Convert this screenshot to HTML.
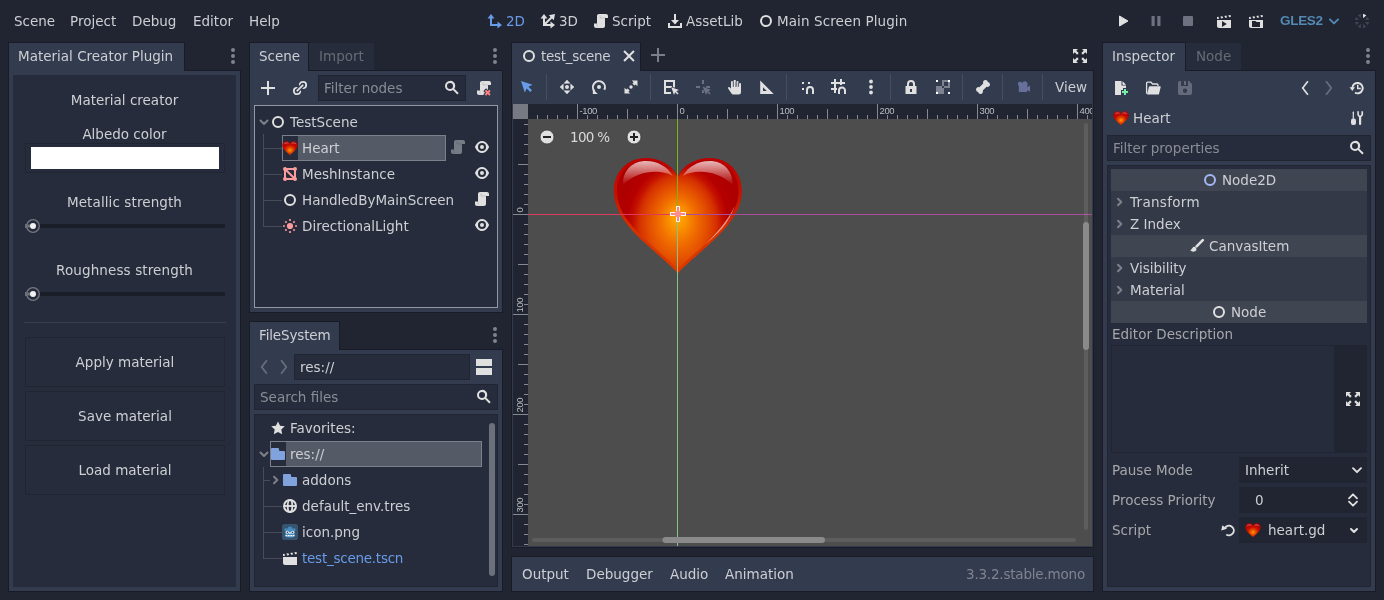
<!DOCTYPE html>
<html><head><meta charset="utf-8"><title>Godot Engine</title>
<style>
*{box-sizing:border-box;margin:0;padding:0}
html,body{width:1384px;height:600px;overflow:hidden;background:#202531}
body{position:relative;font-family:"DejaVu Sans","Liberation Sans",sans-serif;font-size:13.5px;color:#cdcfd3;line-height:16px}
.a{position:absolute}
.t{will-change:transform;position:absolute;white-space:nowrap;height:16px;line-height:16px}
.c{text-align:center}
.p{position:absolute;background:#333b4f}
.d{position:absolute;background:#262c3b}
.dim{color:#676b76}
.ph{color:#8a8d96}
.lbl{color:#a6a7aa}
svg{position:absolute;overflow:visible}
.gs{will-change:transform}
.i{position:absolute;width:16px;height:16px}
.btn{position:absolute;background:#262c3b;border:1px solid #202531;text-align:center}
.le{position:absolute;background:#262c3b;border:1px solid #202531}
.sep{position:absolute;width:1px;background:#474e60}
</style></head><body>
<svg width="0" height="0" style="left:0;top:0"><defs><radialGradient id="hgs" cx="50%" cy="64%" r="56%"><stop offset="0" stop-color="#ff9e00"/><stop offset="0.3" stop-color="#e65000"/><stop offset="0.65" stop-color="#c81000"/><stop offset="1" stop-color="#b40000"/></radialGradient></defs></svg>

<div class="t " style="left:14px;top:13px;">Scene</div>
<div class="t " style="left:70px;top:13px;">Project</div>
<div class="t " style="left:132px;top:13px;">Debug</div>
<div class="t " style="left:193px;top:13px;">Editor</div>
<div class="t " style="left:249px;top:13px;">Help</div>
<div class="t " style="left:506px;top:13px;color:#699ce8">2D</div>
<div class="t " style="left:559px;top:13px;">3D</div>
<div class="t " style="left:612px;top:13px;">Script</div>
<div class="t " style="left:686px;top:13px;">AssetLib</div>
<div class="t " style="left:777px;top:13px;letter-spacing:0.100px">Main Screen Plugin</div>
<div class="t " style="left:1280px;top:13px;color:#5489b4;font-weight:bold;font-size:13.5px;letter-spacing:-0.300px;font-family:Liberation Sans,sans-serif">GLES2</div>
<svg style="left:487px;top:13px;" width="16" height="16" viewBox="0 0 16 16"><path d="M4 1 7.500 5.500H5V11H10.500V8.500L15 12 10.500 15.500V13H3V5.500H.5Z" fill="#699ce8" /></svg>
<svg style="left:540px;top:13px;" width="16" height="16" viewBox="0 0 16 16"><path d="M4 1 7.500 5.500H5V9.600L10.600 4 8.800 2.200 15 1 13.800 7.200 12 5.400 6.400 11H10.500V8.500L15 12 10.500 15.500V13H3V5.500H.5Z" fill="#e0e0e0" /></svg>
<svg style="left:593px;top:13px;" width="16" height="16" viewBox="0 0 16 16"><path d="M6 1C4.900 1 4 1.900 4 3V13H4V10.500H1V13C1 14.100 1.900 15 3 15H10C11.100 15 12 14.100 12 13V5H15V3C15 1.900 14.100 1 13 1Z" fill="#e0e0e0" /><path d="M7 2.200V5H12" fill="none" stroke="#000" stroke-opacity=".18" stroke-width=".7"/><path d="M4 10.500V14.600" fill="none" stroke="#000" stroke-opacity=".15" stroke-width=".7"/></svg>
<svg style="left:667px;top:13px;" width="16" height="16" viewBox="0 0 16 16"><path d="M7 1h2v6h3l-4 4.500L4 7h3zM1 10h2v3h10v-3h2v5H1z" fill="#e0e0e0" /></svg>
<svg style="left:758px;top:13px;" width="16" height="16" viewBox="0 0 16 16"><circle cx="8" cy="8" r="5" fill="none" stroke="#e0e0e0" stroke-width="2"/></svg>
<svg style="left:1115px;top:13px;" width="16" height="16" viewBox="0 0 16 16"><path d="M4.500 3v10l8.500-5z" fill="#e0e0e0" stroke="#e0e0e0" stroke-width="1" stroke-linejoin="round"/></svg>
<svg style="left:1148px;top:13px;" width="16" height="16" viewBox="0 0 16 16"><path d="M3.500 3h3.200v10H3.500zM9.300 3h3.200v10H9.300z" fill="#6d7180" /></svg>
<svg style="left:1180px;top:13px;" width="16" height="16" viewBox="0 0 16 16"><rect x="3" y="3" width="10" height="10" rx="1" fill="#6d7180"/></svg>
<svg style="left:1216px;top:13px;" width="16" height="16" viewBox="0 0 16 16"><path d="m14.560 2-2.240.330.820 1.900 1.710-.250zm-4.220.620-1.980.290.820 1.900 1.980-.290zm-3.960.580-1.980.290.820 1.900 1.980-.290zm-3.960.580-1.420.210v1.980l2.240-.330zM1 7v6c0 1.100.900 2 2 2h12v-8zm5 1 4.800 3-4.800 3z" fill="#e0e0e0" /></svg>
<svg style="left:1248px;top:13px;" width="16" height="16" viewBox="0 0 16 16"><path d="m14.560 2-2.240.330.820 1.900 1.710-.250zm-4.220.620-1.980.290.820 1.900 1.980-.290zm-3.960.580-1.980.290.820 1.900 1.980-.290zm-3.960.580-1.420.210v1.980l2.240-.330zM1 7v6c0 1.100.900 2 2 2h12v-8zm3 1h3.500l1 1h3.500v5h-8z" fill="#e0e0e0" /></svg>
<svg style="left:1326px;top:13px;" width="16" height="16" viewBox="0 0 16 16"><path d="M3.9 6.3L8 10.399999999999999L12.1 6.3" fill="none" stroke="#5489b4" stroke-width="1.9" stroke-linecap="round" stroke-linejoin="round"/></svg>
<svg style="left:1354px;top:13px;" width="16" height="16" viewBox="0 0 16 16"><path d="M9.15 5.23L12.34 2.22L9.02 0.84Z" fill="#e8e8e8"/><path d="M10.77 6.85L15.16 6.98L13.78 3.66Z" fill="#3f4555"/><path d="M10.77 9.15L13.78 12.34L15.16 9.02Z" fill="#3f4555"/><path d="M9.15 10.77L9.02 15.16L12.34 13.78Z" fill="#3f4555"/><path d="M6.85 10.77L3.66 13.78L6.98 15.16Z" fill="#3f4555"/><path d="M5.23 9.15L0.84 9.02L2.22 12.34Z" fill="#3f4555"/><path d="M5.23 6.85L2.22 3.66L0.84 6.98Z" fill="#3f4555"/><path d="M6.85 5.23L6.98 0.84L3.66 2.22Z" fill="#3f4555"/></svg>
<div class="a" style="left:8px;top:70px;width:233px;height:522px;background:#191c26"></div>
<div class="p" style="left:9px;top:71px;width:231px;height:520px;"></div>
<div class="a" style="left:8px;top:42px;width:177px;height:28px;background:#191c26"></div>
<div class="p" style="left:9px;top:43px;width:175px;height:29px;"></div>
<div class="d" style="left:13px;top:75px;width:223px;height:512px;"></div>
<div class="t " style="left:18px;top:48px;">Material Creator Plugin</div>
<svg style="left:225px;top:48px;" width="16" height="16" viewBox="0 0 16 16"><circle cx="8" cy="2" r="2" fill="#80848f"/><circle cx="8" cy="8" r="2" fill="#80848f"/><circle cx="8" cy="14" r="2" fill="#80848f"/></svg>
<div class="t c" style="left:13px;top:92px;width:223px">Material creator</div>
<div class="t c" style="left:13px;top:126px;width:223px">Albedo color</div>
<div class="btn" style="left:25px;top:143px;width:200px;height:30px;"></div>
<div class="a" style="left:31px;top:147px;width:188px;height:22px;background:#fff"></div>
<div class="t c" style="left:13px;top:194px;width:223px;letter-spacing:.1px">Metallic strength</div>
<div class="t c" style="left:13px;top:262px;width:223px;letter-spacing:.12px">Roughness strength</div>
<div class="a" style="left:25px;top:224px;width:200px;height:4px;background:#1a1e28"></div>
<svg style="left:25px;top:218px;" width="16" height="16" viewBox="0 0 16 16"><rect x="0" y="6" width="5" height="4" fill="#6b6f7a"/><circle cx="8" cy="8" r="6.300" fill="#262c3b" stroke="#747883" stroke-width="1.300"/><circle cx="8" cy="8" r="3" fill="#f2f2f2"/><rect x="1.500" y="6.500" width="3.500" height="3" fill="#6b6f7a"/></svg>
<div class="a" style="left:25px;top:292px;width:200px;height:4px;background:#1a1e28"></div>
<svg style="left:25px;top:286px;" width="16" height="16" viewBox="0 0 16 16"><rect x="0" y="6" width="5" height="4" fill="#6b6f7a"/><circle cx="8" cy="8" r="6.300" fill="#262c3b" stroke="#747883" stroke-width="1.300"/><circle cx="8" cy="8" r="3" fill="#f2f2f2"/><rect x="1.500" y="6.500" width="3.500" height="3" fill="#6b6f7a"/></svg>
<div class="a" style="left:24px;top:322px;width:202px;height:1px;background:#393f50"></div>
<div class="btn" style="left:25px;top:337px;width:200px;height:50px;"></div>
<div class="t c" style="left:25px;top:354px;width:200px">Apply material</div>
<div class="btn" style="left:25px;top:391px;width:200px;height:50px;"></div>
<div class="t c" style="left:25px;top:408px;width:200px">Save material</div>
<div class="btn" style="left:25px;top:445px;width:200px;height:50px;"></div>
<div class="t c" style="left:25px;top:462px;width:200px">Load material</div>
<div class="a" style="left:249px;top:70px;width:254px;height:243px;background:#191c26"></div>
<div class="p" style="left:250px;top:71px;width:252px;height:241px;"></div>
<div class="d" style="left:309px;top:43px;width:65px;height:27px;"></div>
<div class="a" style="left:249px;top:42px;width:60px;height:28px;background:#191c26"></div>
<div class="p" style="left:250px;top:43px;width:58px;height:29px;"></div>
<div class="t " style="left:259px;top:48px;">Scene</div>
<div class="t dim" style="left:319px;top:48px;">Import</div>
<svg style="left:487px;top:48px;" width="16" height="16" viewBox="0 0 16 16"><circle cx="8" cy="2" r="2" fill="#80848f"/><circle cx="8" cy="8" r="2" fill="#80848f"/><circle cx="8" cy="14" r="2" fill="#80848f"/></svg>
<svg style="left:260px;top:80px;" width="16" height="16" viewBox="0 0 16 16"><path d="m7 1v6h-6v2h6v6h2v-6h6v-2h-6v-6z" fill="#e0e0e0" /></svg>
<svg style="left:292px;top:80px;" width="16" height="16" viewBox="0 0 16 16"><circle cx="11" cy="5" r="3.200" fill="none" stroke="#e0e0e0" stroke-width="1.800"/><circle cx="5" cy="11" r="3.200" fill="none" stroke="#e0e0e0" stroke-width="1.800"/><path d="M5.300 10.700 10.700 5.300" stroke="#333b4f" stroke-width="4.400" stroke-linecap="round"/><path d="M5.300 10.700 10.700 5.300" stroke="#e0e0e0" stroke-width="1.800" stroke-linecap="round"/></svg>
<div class="le" style="left:318px;top:75px;width:148px;height:26px;"></div>
<div class="t ph" style="left:324px;top:80px;">Filter nodes</div>
<svg style="left:444px;top:80px;" width="16" height="16" viewBox="0 0 16 16"><path d="m6 1a5 5 0 0 0 -5 5 5 5 0 0 0 5 5 5 5 0 0 0 2.9-.93l4.4 4.4 1.4-1.4-4.4-4.4a5 5 0 0 0 .93-2.9 5 5 0 0 0 -5-5zm0 2a3 3 0 0 1 3 3 3 3 0 0 1 -3 3 3 3 0 0 1 -3-3 3 3 0 0 1 3-3z" fill="#e0e0e0" /></svg>
<svg style="left:476px;top:80px;" width="16" height="16" viewBox="0 0 16 16"><path d="M6 1C4.900 1 4 1.900 4 3V13H4V10.500H1V13C1 14.100 1.900 15 3 15H10C11.100 15 12 14.100 12 13V5H15V3C15 1.900 14.100 1 13 1Z" fill="#e0e0e0" /><path d="M7 2.200V5H12" fill="none" stroke="#000" stroke-opacity=".18" stroke-width=".7"/><path d="M4 10.500V14.600" fill="none" stroke="#000" stroke-opacity=".15" stroke-width=".7"/><path d="M10.100 9.700 11.700 11.300 13.300 9.700 14.700 11.100 13.100 12.700 14.700 14.300 13.300 15.700 11.700 14.100 10.100 15.700 8.700 14.300 10.300 12.700 8.700 11.100Z" fill="#333b4f" stroke="#333b4f" stroke-width="2"/><path d="M10.100 9.700 11.700 11.300 13.300 9.700 14.700 11.100 13.100 12.700 14.700 14.300 13.300 15.700 11.700 14.100 10.100 15.700 8.700 14.300 10.300 12.700 8.700 11.100Z" fill="#ff8080" /></svg>
<div class="a" style="left:254px;top:105px;width:244px;height:203px;background:#262c3b;border:1px solid #9497a0"></div>
<div class="a" style="left:263px;top:134px;width:1px;height:93px;background:#474c5a"></div>
<div class="a" style="left:263px;top:148px;width:19px;height:1px;background:#474c5a"></div>
<div class="a" style="left:263px;top:174px;width:19px;height:1px;background:#474c5a"></div>
<div class="a" style="left:263px;top:200px;width:19px;height:1px;background:#474c5a"></div>
<div class="a" style="left:263px;top:226px;width:19px;height:1px;background:#474c5a"></div>
<div class="a" style="left:282px;top:135px;width:164px;height:26px;background:#262c3b;border:1px solid #7d808a"></div>
<div class="a" style="left:298px;top:136px;width:147px;height:24px;background:#555a67"></div>
<svg style="left:256px;top:114px;" width="16" height="16" viewBox="0 0 16 16"><path d="M4.500 6.500L8 10L11.500 6.500" fill="none" stroke="#7c808a" stroke-width="2" stroke-linecap="round" stroke-linejoin="round"/></svg>
<svg style="left:270px;top:114px;" width="16" height="16" viewBox="0 0 16 16"><circle cx="8" cy="8" r="5" fill="none" stroke="#e0e0e0" stroke-width="2"/></svg>
<div class="t " style="left:290px;top:114px;">TestScene</div>
<svg style="left:282px;top:140px;" width="16" height="16" viewBox="0 0 16 16"><path d="M8 3.600C7.200 1.800 5.600 1.300 4.200 1.300C2 1.300 .3 3 .3 5.200C.3 8.800 4.500 11.500 8 15.200C11.500 11.500 15.700 8.800 15.700 5.200C15.700 3 14 1.300 11.800 1.300C10.400 1.300 8.800 1.800 8 3.600Z" fill="url(#hgs)"/><path d="M1.500 4.500C2 2.800 3.500 2 5 2.200C6 2.400 6.800 3 7.200 3.800C6 3.200 3.500 3.200 1.500 4.500Z" fill="#fff" opacity=".3"/><path d="M14.500 4.500C14 2.800 12.500 2 11 2.200C10 2.400 9.200 3 8.800 3.800C10 3.200 12.500 3.200 14.500 4.500Z" fill="#fff" opacity=".3"/></svg>
<div class="t " style="left:302px;top:140px;">Heart</div>
<svg style="left:282px;top:166px;" width="16" height="16" viewBox="0 0 16 16"><path d="m13 1a2 2 0 0 1 2 2 2 2 0 0 1 -1 1.73v6.54a2 2 0 0 1 1 1.73 2 2 0 0 1 -2 2 2 2 0 0 1 -1.73-1h-6.54a2 2 0 0 1 -1.73 1 2 2 0 0 1 -2-2 2 2 0 0 1 1-1.73v-6.54a2 2 0 0 1 -1-1.73 2 2 0 0 1 2-2 2 2 0 0 1 1.73 1h6.54a2 2 0 0 1 1.73-1zm-1.73 3h-5.86l6.59 6.59v-5.86a2 2 0 0 1 -.73-.73zm-7.27 1.41v5.86a2 2 0 0 1 .73.73h5.86z" fill="#fc9c9c" /></svg>
<div class="t " style="left:302px;top:166px;">MeshInstance</div>
<svg style="left:282px;top:192px;" width="16" height="16" viewBox="0 0 16 16"><circle cx="8" cy="8" r="5" fill="none" stroke="#e0e0e0" stroke-width="2"/></svg>
<div class="t " style="left:302px;top:192px;">HandledByMainScreen</div>
<svg style="left:282px;top:218px;" width="16" height="16" viewBox="0 0 16 16"><circle cx="8" cy="8" r="3.100" fill="#fc9c9c"/><path d="M13.10 8.00L15.00 8.00" stroke="#fc9c9c" stroke-width="1.700"/><path d="M8.00 13.10L8.00 15.00" stroke="#fc9c9c" stroke-width="1.700"/><path d="M2.90 8.00L1.00 8.00" stroke="#fc9c9c" stroke-width="1.700"/><path d="M8.00 2.90L8.00 1.00" stroke="#fc9c9c" stroke-width="1.700"/><rect x="11.13" y="11.13" width="1.800" height="1.800" fill="#fc9c9c" transform="rotate(45 12.03 12.03)"/><rect x="3.07" y="11.13" width="1.800" height="1.800" fill="#fc9c9c" transform="rotate(45 3.97 12.03)"/><rect x="3.07" y="3.07" width="1.800" height="1.800" fill="#fc9c9c" transform="rotate(45 3.97 3.97)"/><rect x="11.13" y="3.07" width="1.800" height="1.800" fill="#fc9c9c" transform="rotate(45 12.03 3.97)"/></svg>
<div class="t " style="left:302px;top:218px;">DirectionalLight</div>
<svg style="left:450px;top:139px;" width="16" height="16" viewBox="0 0 16 16"><path d="M6 1C4.900 1 4 1.900 4 3V13H4V10.500H1V13C1 14.100 1.900 15 3 15H10C11.100 15 12 14.100 12 13V5H15V3C15 1.900 14.100 1 13 1Z" fill="#777b86" /><path d="M7 2.200V5H12" fill="none" stroke="#000" stroke-opacity=".18" stroke-width=".7"/><path d="M4 10.500V14.600" fill="none" stroke="#000" stroke-opacity=".15" stroke-width=".7"/></svg>
<svg style="left:474px;top:139px;" width="16" height="16" viewBox="0 0 16 16"><path d="m8 2c-2.5 0-5 1.6-6.9 5.6a1 1 0 0 0 0 .8c1.9 4 4.4 5.6 6.9 5.6s5-1.6 6.9-5.6a1 1 0 0 0 0-.8c-1.9-4-4.4-5.6-6.9-5.6zm0 2a4 4 0 0 1 4 4 4 4 0 0 1 -4 4 4 4 0 0 1 -4-4 4 4 0 0 1 4-4zm0 2a2 2 0 0 0 -2 2 2 2 0 0 0 2 2 2 2 0 0 0 2-2 2 2 0 0 0 -2-2z" fill="#e0e0e0" /></svg>
<svg style="left:474px;top:165px;" width="16" height="16" viewBox="0 0 16 16"><path d="m8 2c-2.5 0-5 1.6-6.9 5.6a1 1 0 0 0 0 .8c1.9 4 4.4 5.6 6.9 5.6s5-1.6 6.9-5.6a1 1 0 0 0 0-.8c-1.9-4-4.4-5.6-6.9-5.6zm0 2a4 4 0 0 1 4 4 4 4 0 0 1 -4 4 4 4 0 0 1 -4-4 4 4 0 0 1 4-4zm0 2a2 2 0 0 0 -2 2 2 2 0 0 0 2 2 2 2 0 0 0 2-2 2 2 0 0 0 -2-2z" fill="#e0e0e0" /></svg>
<svg style="left:474px;top:191px;" width="16" height="16" viewBox="0 0 16 16"><path d="M6 1C4.900 1 4 1.900 4 3V13H4V10.500H1V13C1 14.100 1.900 15 3 15H10C11.100 15 12 14.100 12 13V5H15V3C15 1.900 14.100 1 13 1Z" fill="#e0e0e0" /><path d="M7 2.200V5H12" fill="none" stroke="#000" stroke-opacity=".18" stroke-width=".7"/><path d="M4 10.500V14.600" fill="none" stroke="#000" stroke-opacity=".15" stroke-width=".7"/></svg>
<svg style="left:474px;top:217px;" width="16" height="16" viewBox="0 0 16 16"><path d="m8 2c-2.5 0-5 1.6-6.9 5.6a1 1 0 0 0 0 .8c1.9 4 4.4 5.6 6.9 5.6s5-1.6 6.9-5.6a1 1 0 0 0 0-.8c-1.9-4-4.4-5.6-6.9-5.6zm0 2a4 4 0 0 1 4 4 4 4 0 0 1 -4 4 4 4 0 0 1 -4-4 4 4 0 0 1 4-4zm0 2a2 2 0 0 0 -2 2 2 2 0 0 0 2 2 2 2 0 0 0 2-2 2 2 0 0 0 -2-2z" fill="#e0e0e0" /></svg>
<div class="a" style="left:249px;top:349px;width:254px;height:243px;background:#191c26"></div>
<div class="p" style="left:250px;top:350px;width:252px;height:241px;"></div>
<div class="a" style="left:249px;top:321px;width:91px;height:28px;background:#191c26"></div>
<div class="p" style="left:250px;top:322px;width:89px;height:29px;"></div>
<div class="t " style="left:259px;top:327px;letter-spacing:-0.150px">FileSystem</div>
<svg style="left:487px;top:327px;" width="16" height="16" viewBox="0 0 16 16"><circle cx="8" cy="2" r="2" fill="#80848f"/><circle cx="8" cy="8" r="2" fill="#80848f"/><circle cx="8" cy="14" r="2" fill="#80848f"/></svg>
<svg style="left:256px;top:359px;" width="16" height="16" viewBox="0 0 16 16"><path d="M10.900 1.300L5.700 8L10.900 14.700" fill="none" stroke="#6b6f7c" stroke-width="1.700"/></svg>
<svg style="left:276px;top:359px;" width="16" height="16" viewBox="0 0 16 16"><path d="M5.100 1.300L10.300 8L5.100 14.700" fill="none" stroke="#6b6f7c" stroke-width="1.700"/></svg>
<div class="le" style="left:294px;top:354px;width:176px;height:26px;"></div>
<div class="t " style="left:300px;top:359px;">res://</div>
<div class="a" style="left:476px;top:359px;width:16px;height:7px;background:#e0e0e0"></div>
<div class="a" style="left:476px;top:368px;width:16px;height:7px;background:#e0e0e0"></div>
<div class="le" style="left:254px;top:384px;width:244px;height:26px;"></div>
<div class="t ph" style="left:260px;top:389px;">Search files</div>
<svg style="left:476px;top:389px;" width="16" height="16" viewBox="0 0 16 16"><path d="m6 1a5 5 0 0 0 -5 5 5 5 0 0 0 5 5 5 5 0 0 0 2.9-.93l4.4 4.4 1.4-1.4-4.4-4.4a5 5 0 0 0 .93-2.9 5 5 0 0 0 -5-5zm0 2a3 3 0 0 1 3 3 3 3 0 0 1 -3 3 3 3 0 0 1 -3-3 3 3 0 0 1 3-3z" fill="#e0e0e0" /></svg>
<div class="a" style="left:254px;top:414px;width:244px;height:173px;background:#262c3b;border:1px solid #202531"></div>
<div class="a" style="left:489px;top:423px;width:6px;height:153px;background:#6c707b;border-radius:3px"></div>
<div class="a" style="left:263px;top:467px;width:1px;height:92px;background:#474c5a"></div>
<div class="a" style="left:263px;top:480px;width:7px;height:1px;background:#474c5a"></div>
<div class="a" style="left:263px;top:506px;width:19px;height:1px;background:#474c5a"></div>
<div class="a" style="left:263px;top:532px;width:19px;height:1px;background:#474c5a"></div>
<div class="a" style="left:263px;top:558px;width:19px;height:1px;background:#474c5a"></div>
<div class="a" style="left:270px;top:441px;width:212px;height:26px;background:#262c3b;border:1px solid #7d808a"></div>
<div class="a" style="left:286px;top:442px;width:195px;height:24px;background:#555a67"></div>
<svg style="left:270px;top:420px;" width="16" height="16" viewBox="0 0 16 16"><path d="m8 1.4 2.1 4.3 4.7.6-3.5 3.3.9 4.7-4.2-2.3-4.2 2.3.9-4.7-3.5-3.3 4.7-.6z" fill="#e0e0e0" /></svg>
<div class="t " style="left:290px;top:420px;">Favorites:</div>
<svg style="left:256px;top:446px;" width="16" height="16" viewBox="0 0 16 16"><path d="M4.500 6.500L8 10L11.500 6.500" fill="none" stroke="#7c808a" stroke-width="2" stroke-linecap="round" stroke-linejoin="round"/></svg>
<svg style="left:270px;top:446px;" width="16" height="16" viewBox="0 0 16 16"><path d="m2 2a1 1 0 0 0 -1 1v2 8a1 1 0 0 0 1 1h12a1 1 0 0 0 1-1v-7a1 1 0 0 0 -1-1h-4a1 1 0 0 1 -1-1v-1a1 1 0 0 0 -1-1z" fill="#80a3dd" /></svg>
<div class="t " style="left:290px;top:446px;">res://</div>
<svg style="left:267px;top:472px;" width="16" height="16" viewBox="0 0 16 16"><path d="M7 4.700L10.300 8L7 11.300" fill="none" stroke="#7c808a" stroke-width="2" stroke-linecap="round" stroke-linejoin="round"/></svg>
<svg style="left:282px;top:472px;" width="16" height="16" viewBox="0 0 16 16"><path d="m2 2a1 1 0 0 0 -1 1v2 8a1 1 0 0 0 1 1h12a1 1 0 0 0 1-1v-7a1 1 0 0 0 -1-1h-4a1 1 0 0 1 -1-1v-1a1 1 0 0 0 -1-1z" fill="#80a3dd" /></svg>
<div class="t " style="left:302px;top:472px;">addons</div>
<svg style="left:282px;top:498px;" width="16" height="16" viewBox="0 0 16 16"><circle cx="8" cy="8" r="6" fill="none" stroke="#e0e0e0" stroke-width="2"/><path d="M2 8h12" fill="none" stroke="#e0e0e0" stroke-width="1.9" /><ellipse cx="8" cy="8" rx="2.300" ry="6" fill="none" stroke="#e0e0e0" stroke-width="1.800"/></svg>
<div class="t " style="left:302px;top:498px;">default_env.tres</div>
<svg style="left:282px;top:524px;" width="16" height="16" viewBox="0 0 16 16"><rect x="0" y="0" width="16" height="16" rx="2.500" fill="#355570"/><path d="M2.300 6 3.300 3.900l1.500.9 1.200-.5.300-1.500h3.400l.3 1.500 1.200.5 1.500-.9 1 2.100-1 1.100v4.200c0 1.400-2 2.300-4.700 2.300s-4.700-.9-4.700-2.300V7.100z" fill="#478cbf"/><circle cx="5.300" cy="8.300" r="1.500" fill="#fff"/><circle cx="10.700" cy="8.300" r="1.500" fill="#fff"/><circle cx="5.400" cy="8.400" r=".8" fill="#414042"/><circle cx="10.600" cy="8.400" r=".8" fill="#414042"/><rect x="7.400" y="8" width="1.200" height="2" rx=".5" fill="#fff"/><path d="M3.500 11h9v1.300h-9z" fill="#fff"/><path d="M5.500 11v1.300M8 11v1.300M10.500 11v1.300" stroke="#478cbf" stroke-width=".6"/></svg>
<div class="t " style="left:302px;top:524px;">icon.png</div>
<svg style="left:282px;top:550px;" width="16" height="16" viewBox="0 0 16 16"><path d="m14.560 2-2.240.330.820 1.900 1.710-.250zm-4.220.620-1.980.290.820 1.900 1.980-.290zm-3.960.580-1.980.290.820 1.900 1.980-.290zm-3.960.580-1.420.210v1.980l2.240-.330zM1 7v6c0 1.100.900 2 2 2h12v-8z" fill="#e0e0e0" /></svg>
<div class="t " style="left:302px;top:550px;color:#699ce8;letter-spacing:-0.250px">test_scene.tscn</div>
<div class="a" style="left:511px;top:70px;width:583px;height:478px;background:#191c26"></div>
<div class="p" style="left:512px;top:71px;width:581px;height:476px;"></div>
<div class="a" style="left:511px;top:42px;width:130px;height:28px;background:#191c26"></div>
<div class="p" style="left:512px;top:43px;width:128px;height:29px;"></div>
<svg style="left:521px;top:48px;" width="16" height="16" viewBox="0 0 16 16"><circle cx="8" cy="8" r="5" fill="none" stroke="#e0e0e0" stroke-width="2"/></svg>
<div class="t " style="left:541px;top:48px;letter-spacing:-0.300px">test_scene</div>
<svg style="left:621px;top:48px;" width="16" height="16" viewBox="0 0 16 16"><path d="M3.76 2.34 2.34 3.76 6.59 8 2.34 12.24 3.76 13.66 8 9.41 12.24 13.66 13.66 12.24 9.41 8 13.66 3.76 12.24 2.34 8 6.59z" fill="#e0e0e0" /></svg>
<svg style="left:650px;top:47px;" width="16" height="16" viewBox="0 0 16 16"><path d="m7 1v6h-6v2h6v6h2v-6h6v-2h-6v-6z" fill="#7a7e88" /></svg>
<svg style="left:1072px;top:48px;" width="16" height="16" viewBox="0 0 16 16"><path d="M1 1H6L4.300 2.700 6.700 5.100 5.100 6.700 2.700 4.300 1 6ZM15 1V6L13.300 4.300 10.900 6.700 9.300 5.100 11.700 2.700 10 1ZM1 15V10L2.700 11.700 5.100 9.300 6.700 10.900 4.300 13.300 6 15ZM15 15H10L11.700 13.300 9.300 10.900 10.900 9.300 13.300 11.700 15 10Z" fill="#e0e0e0" /></svg>
<svg style="left:519px;top:79px;" width="16" height="16" viewBox="0 0 16 16"><path d="M2 2 5.800 13.600 7.700 9.400 11.300 13 13 11.300 9.400 7.700 13.600 5.800Z" fill="#699ce8" /></svg>
<svg style="left:559px;top:79px;" width="16" height="16" viewBox="0 0 16 16"><path d="M8 1 10.900 4.300H5.100ZM8 15 5.100 11.700H10.900ZM1 8 4.300 5.100V10.900ZM15 8 11.700 10.900V5.100Z" fill="#e0e0e0" stroke="#e0e0e0" stroke-width=".5" stroke-linejoin="round"/><circle cx="8" cy="8" r="2" fill="#e0e0e0"/></svg>
<svg style="left:591px;top:79px;" width="16" height="16" viewBox="0 0 16 16"><path d="M3.600 12.300A6 6 0 1 1 13.300 10.800" fill="none" stroke="#e0e0e0" stroke-width="2"/><path d="M1.800 15 1.800 10 6.800 15Z" fill="#e0e0e0" /><circle cx="8" cy="8" r="2" fill="#e0e0e0"/></svg>
<svg style="left:623px;top:79px;" width="16" height="16" viewBox="0 0 16 16"><path d="M8.800 1.500H14.500V7.200L12.700 5.400 11.500 6.600 9.400 4.500 10.600 3.300ZM1.500 8.800V14.500H7.200L5.400 12.700 6.600 11.500 4.500 9.400 3.300 10.600Z" fill="#e0e0e0" /><circle cx="8" cy="8" r="1.700" fill="#e0e0e0"/></svg>
<svg style="left:663px;top:79px;" width="16" height="16" viewBox="0 0 16 16"><path d="M1 1H12V8.500H10V3H3V7H9V9H3V13H8V15H1Z" fill="#e0e0e0" /><path d="M8.300 8.300 16 11 13.300 12.200 15.600 14.500 14.500 15.600 12.200 13.300 11 16Z" fill="#e0e0e0" stroke="#333b4f" stroke-width="1" paint-order="stroke"/></svg>
<svg style="left:695px;top:79px;" width="16" height="16" viewBox="0 0 16 16"><path d="M7 1h2v4H7zM1 7h4v2H1zM7 11h2v3H7zM11 7h4v2h-4z" fill="#6b7183" /><path d="M7.600 7.600 16 11 13.300 12.200 15.600 14.500 14.500 15.600 12.200 13.300 11 16Z" fill="#6b7183" stroke="#333b4f" stroke-width="1" paint-order="stroke"/></svg>
<svg style="left:727px;top:79px;" width="16" height="16" viewBox="0 0 16 16"><path d="M7.500 1a1 1 0 0 0-1 1v5.500h-.5V3a1 1 0 0 0-2 0v6.700L2.800 8.200a1.100 1.100 0 0 0-1.700 1.300L4.500 14.500c.4.600 1 .9 1.700.9h5.300a2.500 2.500 0 0 0 2.500-2.500V5a1 1 0 0 0-2 0v2.500h-.5V3a1 1 0 0 0-2 0v4.500h-.5V2a1 1 0 0 0-1-1z" fill="#e0e0e0" /><path d="M6.250 2.500V8M8.750 2.500V8M11.250 3.500V8" stroke="#333b4f" stroke-width=".6" fill="none"/></svg>
<svg style="left:759px;top:79px;" width="16" height="16" viewBox="0 0 16 16"><path d="M1.200 1.500V15H14.700ZM4 8.200 7.800 12H4Z" fill="#e0e0e0" fill-rule="evenodd"/></svg>
<svg style="left:799px;top:79px;" width="16" height="16" viewBox="0 0 16 16"><path d="M3 3h2v2H3zM9 3h2v2H9zM3 9h2v2H3z" fill="#e0e0e0" /><path d="M8 15V11A3 3 0 0 1 14 11V15" fill="none" stroke="#e0e0e0" stroke-width="2"/></svg>
<svg style="left:831px;top:79px;" width="16" height="16" viewBox="0 0 16 16"><path d="M3 0h2v3h4V0h2v3h3v2h-3v1H9V5H5v4h1v2H5v3H3v-3H0V9h3V5H0V3h3z" fill="#e0e0e0" /><path d="M8 15V11.500A3 3 0 0 1 14 11.500V15" fill="none" stroke="#e0e0e0" stroke-width="2"/></svg>
<svg style="left:863px;top:79px;" width="16" height="16" viewBox="0 0 16 16"><circle cx="8" cy="2.5" r="1.9" fill="#e0e0e0"/><circle cx="8" cy="8" r="1.9" fill="#e0e0e0"/><circle cx="8" cy="13.5" r="1.9" fill="#e0e0e0"/></svg>
<svg style="left:903px;top:79px;" width="16" height="16" viewBox="0 0 16 16"><path d="M8 1a4 4 0 0 0-4 4v2H2.500v8h11V7H12V5a4 4 0 0 0-4-4zm0 2a2 2 0 0 1 2 2v2H6V5a2 2 0 0 1 2-2zM7 10h2v3H7z" fill="#e0e0e0" /></svg>
<svg style="left:935px;top:79px;" width="16" height="16" viewBox="0 0 16 16"><path d="M1 7h8v8H1zM7 1h8v8H7zM9 3v4h4V3z" fill="#7f8391" fill-rule="evenodd"/><path d="M1 1h2v2H1zM13 1h2v2h-2zM1 13h2v2H1zM13 13h2v2h-2z" fill="#fff" /></svg>
<svg style="left:975px;top:79px;" width="16" height="16" viewBox="0 0 16 16"><path d="M10.500 1a2.500 2.500 0 0 0-2.300 3.400L4.400 8.200A2.500 2.500 0 0 0 1 10.500a2.500 2.500 0 0 0 2.100 2.400A2.500 2.500 0 0 0 5.500 15a2.500 2.500 0 0 0 2.300-3.400l3.800-3.800A2.500 2.500 0 0 0 15 5.500a2.500 2.500 0 0 0-2.100-2.400A2.500 2.500 0 0 0 10.500 1z" fill="#e0e0e0" /></svg>
<svg style="left:1015px;top:79px;" width="16" height="16" viewBox="0 0 16 16"><path d="M9.800 2.200a2.700 2.700 0 0 0-2.600 2A2.200 2.200 0 0 0 5 2.800a2.200 2.200 0 0 0-2.200 2.200 2.200 2.200 0 0 0 1 1.800V12a1 1 0 0 0 1 1h6.500a1 1 0 0 0 1-1v-1l2.700 1.800V6.500l-2.700 1.800V6.700A2.700 2.700 0 0 0 12.500 4.900a2.700 2.700 0 0 0-2.700-2.700z" fill="#67709a" /></svg>
<div class="sep" style="left:546px;top:74px;width:1px;height:26px;"></div>
<div class="sep" style="left:650px;top:74px;width:1px;height:26px;"></div>
<div class="sep" style="left:786px;top:74px;width:1px;height:26px;"></div>
<div class="sep" style="left:890px;top:74px;width:1px;height:26px;"></div>
<div class="sep" style="left:962px;top:74px;width:1px;height:26px;"></div>
<div class="sep" style="left:1002px;top:74px;width:1px;height:26px;"></div>
<div class="sep" style="left:1042px;top:74px;width:1px;height:26px;"></div>
<div class="t " style="left:1055px;top:79px;">View</div>
<div class="a" style="left:513px;top:104px;width:579px;height:442px;background:#4d4d4d;overflow:hidden">
<svg class="gs" style="left:0;top:0" width="579" height="442" viewBox="0 0 579 442"><defs>
<radialGradient id="HG" gradientUnits="userSpaceOnUse" cx="0" cy="20" r="84" fx="0" fy="3" gradientTransform="scale(0.78 1)"><stop offset="0" stop-color="#ffb000"/><stop offset="0.12" stop-color="#fa9600"/><stop offset="0.3" stop-color="#f06c00"/><stop offset="0.5" stop-color="#e04800"/><stop offset="0.62" stop-color="#d43000"/><stop offset="0.72" stop-color="#c41000"/><stop offset="0.82" stop-color="#b60000"/><stop offset="1" stop-color="#ae0000"/></radialGradient>
<linearGradient id="RIM" gradientUnits="userSpaceOnUse" x1="0" y1="-57" x2="0" y2="60"><stop offset="0" stop-color="#bc0000"/><stop offset="0.35" stop-color="#c81400"/><stop offset="0.6" stop-color="#d63000"/><stop offset="1" stop-color="#dc3a00"/></linearGradient>
<linearGradient id="GL" x1="0" y1="0" x2="0" y2="1"><stop offset="0" stop-color="#fff" stop-opacity=".72"/><stop offset="1" stop-color="#fff" stop-opacity="0"/></linearGradient>
</defs><g transform="translate(164.8,110.0)"><path d="M0,-37.500 C-6,-49.500 -18,-56 -32,-56 C-51,-56 -64,-41.500 -64,-23 C-64,-3 -50,13 -34,28 C-20,41 -6,52 0,59.500 C6,52 20,41 34,28 C50,13 64,-3 64,-23 C64,-41.500 51,-56 32,-56 C18,-56 6,-49.500 0,-37.500 Z" fill="url(#RIM)"/><path d="M0,-37.500 C-6,-49.500 -18,-56 -32,-56 C-51,-56 -64,-41.500 -64,-23 C-64,-3 -50,13 -34,28 C-20,41 -6,52 0,59.500 C6,52 20,41 34,28 C50,13 64,-3 64,-23 C64,-41.500 51,-56 32,-56 C18,-56 6,-49.500 0,-37.500 Z" fill="url(#HG)" transform="translate(0,-0.8) scale(0.95)"/><path d="M-55,-29 C-55,-45 -44,-53 -32,-53 C-20,-53 -10,-47 -5,-38 C-14,-44 -38,-46 -55,-29 Z" fill="url(#GL)"/><path d="M55,-29 C55,-45 44,-53 32,-53 C20,-53 10,-47 5,-38 C14,-44 38,-46 55,-29 Z" fill="url(#GL)"/><path d="M57,-8 C52,8 40,20 27,31 C40,18 50,6 57,-8 Z" fill="#fff" opacity=".55"/></g><rect x="0" y="110.0" width="164.5" height="1" fill="#dd3a5c"/><rect x="164.5" y="110.0" width="414.5" height="1" fill="#a84c9c"/><rect x="164.0" y="0" width="1" height="110.5" fill="#7fb21a"/><rect x="164.0" y="110.5" width="1" height="331.5" fill="#86c48e"/><g transform="translate(165.0,110.0)"><path d="M-2,-8h4v5.500h-4zM-2,2.500h4v5.500h-4zM-8,-2h5.500v4h-5.500zM2.500,-2h5.500v4h-5.500z" fill="#fff" fill-opacity=".92"/><path d="M-1,-7h2v4h-2zM-1,3h2v4h-2zM-7,-1h4v2h-4zM3,-1h4v2h-4z" fill="#ff8484"/><circle r="3.100" fill="#ff8c8c"/></g><rect x="19" y="434" width="544" height="4" rx="2" fill="#fff" opacity=".09"/><rect x="149.5" y="433" width="162.5" height="6" rx="3" fill="#8a8a8a"/><rect x="571" y="19" width="4" height="407" rx="2" fill="#fff" opacity=".09"/><rect x="570" y="118" width="6" height="128" rx="3" fill="#8a8a8a"/><rect x="0" y="0" width="579" height="15" fill="#202531"/><rect x="0" y="0" width="15" height="442" fill="#202531"/><rect x="0" y="0" width="15" height="15" fill="#777a83"/><rect x="24.0" y="11" width="1" height="4" fill="#868991"/><rect x="34.0" y="11" width="1" height="4" fill="#868991"/><rect x="44.0" y="11" width="1" height="4" fill="#868991"/><rect x="54.0" y="11" width="1" height="4" fill="#868991"/><rect x="64.0" y="0" width="1" height="15" fill="#868991"/><rect x="74.0" y="11" width="1" height="4" fill="#868991"/><rect x="84.0" y="11" width="1" height="4" fill="#868991"/><rect x="94.0" y="11" width="1" height="4" fill="#868991"/><rect x="104.0" y="11" width="1" height="4" fill="#868991"/><rect x="114.0" y="5" width="1" height="10" fill="#868991"/><rect x="124.0" y="11" width="1" height="4" fill="#868991"/><rect x="134.0" y="11" width="1" height="4" fill="#868991"/><rect x="144.0" y="11" width="1" height="4" fill="#868991"/><rect x="154.0" y="11" width="1" height="4" fill="#868991"/><rect x="164.0" y="0" width="1" height="15" fill="#868991"/><rect x="174.0" y="11" width="1" height="4" fill="#868991"/><rect x="184.0" y="11" width="1" height="4" fill="#868991"/><rect x="194.0" y="11" width="1" height="4" fill="#868991"/><rect x="204.0" y="11" width="1" height="4" fill="#868991"/><rect x="214.0" y="5" width="1" height="10" fill="#868991"/><rect x="224.0" y="11" width="1" height="4" fill="#868991"/><rect x="234.0" y="11" width="1" height="4" fill="#868991"/><rect x="244.0" y="11" width="1" height="4" fill="#868991"/><rect x="254.0" y="11" width="1" height="4" fill="#868991"/><rect x="264.0" y="0" width="1" height="15" fill="#868991"/><rect x="274.0" y="11" width="1" height="4" fill="#868991"/><rect x="284.0" y="11" width="1" height="4" fill="#868991"/><rect x="294.0" y="11" width="1" height="4" fill="#868991"/><rect x="304.0" y="11" width="1" height="4" fill="#868991"/><rect x="314.0" y="5" width="1" height="10" fill="#868991"/><rect x="324.0" y="11" width="1" height="4" fill="#868991"/><rect x="334.0" y="11" width="1" height="4" fill="#868991"/><rect x="344.0" y="11" width="1" height="4" fill="#868991"/><rect x="354.0" y="11" width="1" height="4" fill="#868991"/><rect x="364.0" y="0" width="1" height="15" fill="#868991"/><rect x="374.0" y="11" width="1" height="4" fill="#868991"/><rect x="384.0" y="11" width="1" height="4" fill="#868991"/><rect x="394.0" y="11" width="1" height="4" fill="#868991"/><rect x="404.0" y="11" width="1" height="4" fill="#868991"/><rect x="414.0" y="5" width="1" height="10" fill="#868991"/><rect x="424.0" y="11" width="1" height="4" fill="#868991"/><rect x="434.0" y="11" width="1" height="4" fill="#868991"/><rect x="444.0" y="11" width="1" height="4" fill="#868991"/><rect x="454.0" y="11" width="1" height="4" fill="#868991"/><rect x="464.0" y="0" width="1" height="15" fill="#868991"/><rect x="474.0" y="11" width="1" height="4" fill="#868991"/><rect x="484.0" y="11" width="1" height="4" fill="#868991"/><rect x="494.0" y="11" width="1" height="4" fill="#868991"/><rect x="504.0" y="11" width="1" height="4" fill="#868991"/><rect x="514.0" y="5" width="1" height="10" fill="#868991"/><rect x="524.0" y="11" width="1" height="4" fill="#868991"/><rect x="534.0" y="11" width="1" height="4" fill="#868991"/><rect x="544.0" y="11" width="1" height="4" fill="#868991"/><rect x="554.0" y="11" width="1" height="4" fill="#868991"/><rect x="564.0" y="0" width="1" height="15" fill="#868991"/><rect x="574.0" y="11" width="1" height="4" fill="#868991"/><rect x="11" y="20.0" width="4" height="1" fill="#868991"/><rect x="11" y="30.0" width="4" height="1" fill="#868991"/><rect x="11" y="40.0" width="4" height="1" fill="#868991"/><rect x="11" y="50.0" width="4" height="1" fill="#868991"/><rect x="5" y="60.0" width="10" height="1" fill="#868991"/><rect x="11" y="70.0" width="4" height="1" fill="#868991"/><rect x="11" y="80.0" width="4" height="1" fill="#868991"/><rect x="11" y="90.0" width="4" height="1" fill="#868991"/><rect x="11" y="100.0" width="4" height="1" fill="#868991"/><rect x="0" y="110.0" width="15" height="1" fill="#868991"/><rect x="11" y="120.0" width="4" height="1" fill="#868991"/><rect x="11" y="130.0" width="4" height="1" fill="#868991"/><rect x="11" y="140.0" width="4" height="1" fill="#868991"/><rect x="11" y="150.0" width="4" height="1" fill="#868991"/><rect x="5" y="160.0" width="10" height="1" fill="#868991"/><rect x="11" y="170.0" width="4" height="1" fill="#868991"/><rect x="11" y="180.0" width="4" height="1" fill="#868991"/><rect x="11" y="190.0" width="4" height="1" fill="#868991"/><rect x="11" y="200.0" width="4" height="1" fill="#868991"/><rect x="0" y="210.0" width="15" height="1" fill="#868991"/><rect x="11" y="220.0" width="4" height="1" fill="#868991"/><rect x="11" y="230.0" width="4" height="1" fill="#868991"/><rect x="11" y="240.0" width="4" height="1" fill="#868991"/><rect x="11" y="250.0" width="4" height="1" fill="#868991"/><rect x="5" y="260.0" width="10" height="1" fill="#868991"/><rect x="11" y="270.0" width="4" height="1" fill="#868991"/><rect x="11" y="280.0" width="4" height="1" fill="#868991"/><rect x="11" y="290.0" width="4" height="1" fill="#868991"/><rect x="11" y="300.0" width="4" height="1" fill="#868991"/><rect x="0" y="310.0" width="15" height="1" fill="#868991"/><rect x="11" y="320.0" width="4" height="1" fill="#868991"/><rect x="11" y="330.0" width="4" height="1" fill="#868991"/><rect x="11" y="340.0" width="4" height="1" fill="#868991"/><rect x="11" y="350.0" width="4" height="1" fill="#868991"/><rect x="5" y="360.0" width="10" height="1" fill="#868991"/><rect x="11" y="370.0" width="4" height="1" fill="#868991"/><rect x="11" y="380.0" width="4" height="1" fill="#868991"/><rect x="11" y="390.0" width="4" height="1" fill="#868991"/><rect x="11" y="400.0" width="4" height="1" fill="#868991"/><rect x="0" y="410.0" width="15" height="1" fill="#868991"/><rect x="11" y="420.0" width="4" height="1" fill="#868991"/><rect x="11" y="430.0" width="4" height="1" fill="#868991"/><rect x="11" y="440.0" width="4" height="1" fill="#868991"/><text x="66.5" y="10" font-size="9.500" letter-spacing="-0.400" fill="#bcbec3" font-family="Liberation Sans,DejaVu Sans,sans-serif">-100</text><text x="166.5" y="10" font-size="9.500" letter-spacing="-0.400" fill="#bcbec3" font-family="Liberation Sans,DejaVu Sans,sans-serif">0</text><text x="266.5" y="10" font-size="9.500" letter-spacing="-0.400" fill="#bcbec3" font-family="Liberation Sans,DejaVu Sans,sans-serif">100</text><text x="366.5" y="10" font-size="9.500" letter-spacing="-0.400" fill="#bcbec3" font-family="Liberation Sans,DejaVu Sans,sans-serif">200</text><text x="466.5" y="10" font-size="9.500" letter-spacing="-0.400" fill="#bcbec3" font-family="Liberation Sans,DejaVu Sans,sans-serif">300</text><text x="566.5" y="10" font-size="9.500" letter-spacing="-0.400" fill="#bcbec3" font-family="Liberation Sans,DejaVu Sans,sans-serif">400</text><text transform="translate(10,108.5) rotate(-90)" font-size="9.500" letter-spacing="-0.400" fill="#bcbec3" font-family="Liberation Sans,DejaVu Sans,sans-serif">0</text><text transform="translate(10,208.5) rotate(-90)" font-size="9.500" letter-spacing="-0.400" fill="#bcbec3" font-family="Liberation Sans,DejaVu Sans,sans-serif">100</text><text transform="translate(10,308.5) rotate(-90)" font-size="9.500" letter-spacing="-0.400" fill="#bcbec3" font-family="Liberation Sans,DejaVu Sans,sans-serif">200</text><text transform="translate(10,408.5) rotate(-90)" font-size="9.500" letter-spacing="-0.400" fill="#bcbec3" font-family="Liberation Sans,DejaVu Sans,sans-serif">300</text></svg>
<svg style="left:26px;top:25px" width="16" height="16" viewBox="0 0 16 16"><circle cx="8" cy="8" r="7" fill="#e0e0e0" stroke="#3a3a3a" stroke-width=".8"/><rect x="4" y="7" width="8" height="2" fill="#222"/></svg>
<svg style="left:113px;top:25px" width="16" height="16" viewBox="0 0 16 16"><circle cx="8" cy="8" r="7" fill="#e0e0e0" stroke="#3a3a3a" stroke-width=".8"/><path d="M4 7h3V4h2v3h3v2H9v3H7V9H4z" fill="#222"/></svg>
<div class="t" style="left:57px;top:25px;color:#d9d9d9;letter-spacing:-0.700px">100 %</div>
</div>
<div class="a" style="left:511px;top:556px;width:583px;height:36px;background:#191c26"></div>
<div class="p" style="left:512px;top:557px;width:581px;height:34px;"></div>
<div class="t " style="left:522px;top:566px;">Output</div>
<div class="t " style="left:586px;top:566px;">Debugger</div>
<div class="t " style="left:670px;top:566px;">Audio</div>
<div class="t " style="left:725px;top:566px;">Animation</div>
<div class="t " style="left:966px;top:566px;color:#80848f;letter-spacing:-0.200px">3.3.2.stable.mono</div>
<div class="a" style="left:1102px;top:70px;width:274px;height:522px;background:#191c26"></div>
<div class="p" style="left:1103px;top:71px;width:272px;height:520px;"></div>
<div class="d" style="left:1186px;top:43px;width:55px;height:27px;"></div>
<div class="a" style="left:1102px;top:42px;width:84px;height:28px;background:#191c26"></div>
<div class="p" style="left:1103px;top:43px;width:82px;height:29px;"></div>
<div class="t " style="left:1112px;top:48px;">Inspector</div>
<div class="t dim" style="left:1196px;top:48px;">Node</div>
<svg style="left:1360px;top:48px;" width="16" height="16" viewBox="0 0 16 16"><circle cx="8" cy="2" r="2" fill="#80848f"/><circle cx="8" cy="8" r="2" fill="#80848f"/><circle cx="8" cy="14" r="2" fill="#80848f"/></svg>
<svg style="left:1113px;top:80px;" width="16" height="16" viewBox="0 0 16 16"><path d="M2 1H8.500V5.500H13V8H10V10H8V15H2Z" fill="#e0e0e0" /><path d="M9.500 1.300 13 4.800H9.500Z" fill="#f4f4f4" /><path d="M11 9v2H9v2h2v2h2v-2h2v-2h-2V9z" fill="#74eea8" /></svg>
<svg style="left:1145px;top:80px;" width="16" height="16" viewBox="0 0 16 16"><path d="M1.600 13.800V3.200a1 1 0 0 1 1-1H6l1.600 1.800H12a1 1 0 0 1 1 1V6" fill="none" stroke="#e0e0e0" stroke-width="1.300"/><path d="M4.800 6.300H15.200a.5.5 0 0 1 .5.600L14 14a.8.8 0 0 1-.8.600H2.600a.5.5 0 0 1-.5-.600L3.900 6.900a.9.9 0 0 1 .9-.600Z" fill="#e0e0e0" /></svg>
<svg style="left:1177px;top:80px;" width="16" height="16" viewBox="0 0 16 16"><path d="M3 1a2 2 0 0 0-2 2v10a2 2 0 0 0 2 2h10a2 2 0 0 0 2-2V4l-3-3h-1v5H4V1zm4 0v4h2V1zM8 8.500a2.200 2.200 0 1 1 0 4.400 2.200 2.200 0 0 1 0-4.400z" fill="#666b7c" /></svg>
<svg style="left:1297px;top:80px;" width="16" height="16" viewBox="0 0 16 16"><path d="M10.900 1.300L5.700 8L10.900 14.700" fill="none" stroke="#e0e0e0" stroke-width="1.700"/></svg>
<svg style="left:1321px;top:80px;" width="16" height="16" viewBox="0 0 16 16"><path d="M5.100 1.300L10.300 8L5.100 14.700" fill="none" stroke="#6b6f7c" stroke-width="1.700"/></svg>
<svg style="left:1349px;top:80px;" width="16" height="16" viewBox="0 0 16 16"><path d="M3.300 8A5.200 5.200 0 1 1 6 12.700" fill="none" stroke="#e0e0e0" stroke-width="1.900"/><path d="M.600 7.300H6L3.300 11Z" fill="#e0e0e0" /><path d="M8 4.800h1.500v2.900h2.300v1.500H8z" fill="#e0e0e0" /></svg>
<svg style="left:1113px;top:110px;" width="16" height="16" viewBox="0 0 16 16"><path d="M8 3.600C7.200 1.800 5.600 1.300 4.200 1.300C2 1.300 .3 3 .3 5.200C.3 8.800 4.500 11.500 8 15.200C11.500 11.500 15.700 8.800 15.700 5.200C15.700 3 14 1.300 11.800 1.300C10.400 1.300 8.800 1.800 8 3.600Z" fill="url(#hgs)"/><path d="M1.500 4.500C2 2.800 3.500 2 5 2.200C6 2.400 6.800 3 7.200 3.800C6 3.200 3.500 3.200 1.500 4.500Z" fill="#fff" opacity=".3"/><path d="M14.500 4.500C14 2.800 12.500 2 11 2.200C10 2.400 9.200 3 8.800 3.800C10 3.200 12.500 3.200 14.500 4.500Z" fill="#fff" opacity=".3"/></svg>
<div class="t " style="left:1133px;top:110px;">Heart</div>
<svg style="left:1349px;top:110px;" width="16" height="16" viewBox="0 0 16 16"><path d="M4.300 1.200 5.100 2.300 4.900 3.400V8.700H3.700V3.400L3.500 2.300Z" fill="#e0e0e0" /><rect x="2" y="8.500" width="5" height="6.500" rx="1.900" fill="#e0e0e0"/><path d="M8.300 1.200H9.900V4.600L10.600 5.400H11.600L12.400 4.600V1.200H14.100V5L12.200 7.300V14a1 1 0 0 1-1 1h-.2a1 1 0 0 1-1-1V7.300L8.300 5Z" fill="#e0e0e0" /></svg>
<div class="le" style="left:1107px;top:135px;width:264px;height:26px;"></div>
<div class="t ph" style="left:1113px;top:140px;">Filter properties</div>
<svg style="left:1349px;top:140px;" width="16" height="16" viewBox="0 0 16 16"><path d="m6 1a5 5 0 0 0 -5 5 5 5 0 0 0 5 5 5 5 0 0 0 2.9-.93l4.4 4.4 1.4-1.4-4.4-4.4a5 5 0 0 0 .93-2.9 5 5 0 0 0 -5-5zm0 2a3 3 0 0 1 3 3 3 3 0 0 1 -3 3 3 3 0 0 1 -3-3 3 3 0 0 1 3-3z" fill="#e0e0e0" /></svg>
<div class="a" style="left:1107px;top:165px;width:264px;height:422px;background:#262c3b;border:1px solid #202531"></div>
<div class="a" style="left:1111px;top:169px;width:256px;height:22px;background:#404552"></div>
<svg style="left:1202px;top:172px;" width="16" height="16" viewBox="0 0 16 16"><circle cx="8" cy="8" r="5" fill="none" stroke="#a5b7f3" stroke-width="2"/></svg>
<div class="t " style="left:1222px;top:172px;">Node2D</div>
<div class="a" style="left:1111px;top:191px;width:256px;height:22px;background:#333947"></div>
<svg style="left:1111px;top:194px;" width="16" height="16" viewBox="0 0 16 16"><path d="M7 4.700L10.300 8L7 11.300" fill="none" stroke="#7c808a" stroke-width="2" stroke-linecap="round" stroke-linejoin="round"/></svg>
<div class="t " style="left:1130px;top:194px;"><span style="letter-spacing:.3px">Transform</span></div>
<div class="a" style="left:1111px;top:213px;width:256px;height:22px;background:#333947"></div>
<svg style="left:1111px;top:216px;" width="16" height="16" viewBox="0 0 16 16"><path d="M7 4.700L10.300 8L7 11.300" fill="none" stroke="#7c808a" stroke-width="2" stroke-linecap="round" stroke-linejoin="round"/></svg>
<div class="t " style="left:1130px;top:216px;">Z Index</div>
<div class="a" style="left:1111px;top:235px;width:256px;height:22px;background:#404552"></div>
<svg style="left:1189px;top:238px;" width="16" height="16" viewBox="0 0 16 16"><path d="M13.800 2.200 7.600 8.400" stroke="#e0e0e0" stroke-width="2.600" stroke-linecap="round"/><path d="M5.400 8.800C3.400 8.800 3.600 10.800 1.300 12.300 2.800 14.200 6.400 14 7.300 12.200 7.900 10.900 6.800 8.800 5.400 8.800z" fill="#e0e0e0" /></svg>
<div class="t " style="left:1209px;top:238px;">CanvasItem</div>
<div class="a" style="left:1111px;top:257px;width:256px;height:22px;background:#333947"></div>
<svg style="left:1111px;top:260px;" width="16" height="16" viewBox="0 0 16 16"><path d="M7 4.700L10.300 8L7 11.300" fill="none" stroke="#7c808a" stroke-width="2" stroke-linecap="round" stroke-linejoin="round"/></svg>
<div class="t " style="left:1130px;top:260px;">Visibility</div>
<div class="a" style="left:1111px;top:279px;width:256px;height:22px;background:#333947"></div>
<svg style="left:1111px;top:282px;" width="16" height="16" viewBox="0 0 16 16"><path d="M7 4.700L10.300 8L7 11.300" fill="none" stroke="#7c808a" stroke-width="2" stroke-linecap="round" stroke-linejoin="round"/></svg>
<div class="t " style="left:1130px;top:282px;">Material</div>
<div class="a" style="left:1111px;top:301px;width:256px;height:22px;background:#404552"></div>
<svg style="left:1211px;top:304px;" width="16" height="16" viewBox="0 0 16 16"><circle cx="8" cy="8" r="5" fill="none" stroke="#e0e0e0" stroke-width="2"/></svg>
<div class="t " style="left:1231px;top:304px;">Node</div>
<div class="t lbl" style="left:1112px;top:326px;">Editor Description</div>
<div class="a" style="left:1111px;top:345px;width:224px;height:108px;background:#262c3b;border:1px solid #202531"></div>
<div class="a" style="left:1334px;top:345px;width:33px;height:108px;background:#202531"></div>
<svg style="left:1345px;top:391px;" width="16" height="16" viewBox="0 0 16 16"><path d="M1 1H6L4.300 2.700 6.700 5.100 5.100 6.700 2.700 4.300 1 6ZM15 1V6L13.300 4.300 10.900 6.700 9.300 5.100 11.700 2.700 10 1ZM1 15V10L2.700 11.700 5.100 9.300 6.700 10.900 4.300 13.300 6 15ZM15 15H10L11.700 13.300 9.300 10.900 10.900 9.300 13.300 11.700 15 10Z" fill="#e0e0e0" /></svg>
<div class="a" style="left:1239px;top:457px;width:128px;height:26px;background:#202531"></div>
<div class="a" style="left:1239px;top:487px;width:128px;height:26px;background:#202531"></div>
<div class="a" style="left:1239px;top:517px;width:128px;height:26px;background:#202531"></div>
<div class="t lbl" style="left:1112px;top:462px;">Pause Mode</div>
<div class="t " style="left:1245px;top:462px;">Inherit</div>
<svg style="left:1349px;top:462px;" width="16" height="16" viewBox="0 0 16 16"><path d="M4 6.2L8 10.2L12 6.2" fill="none" stroke="#e0e0e0" stroke-width="1.9" stroke-linecap="round" stroke-linejoin="round"/></svg>
<div class="t lbl" style="left:1112px;top:492px;">Process Priority</div>
<div class="t " style="left:1255px;top:492px;">0</div>
<svg style="left:1345px;top:492px;" width="16" height="16" viewBox="0 0 16 16"><path d="M4 6.300L8 2.300L12 6.300M4 9.700L8 13.700L12 9.700" fill="none" stroke="#e0e0e0" stroke-width="1.800" stroke-linecap="round" stroke-linejoin="round"/></svg>
<div class="t lbl" style="left:1112px;top:522px;">Script</div>
<svg style="left:1220px;top:522px;" width="16" height="16" viewBox="0 0 16 16"><path d="M5.200 5.600A4.800 4.800 0 1 1 6.300 12.500" fill="none" stroke="#e0e0e0" stroke-width="1.900"/><path d="M1.200 8.600 2.400 3.300 7 6.700Z" fill="#e0e0e0" /></svg>
<svg style="left:1245px;top:522px;" width="16" height="16" viewBox="0 0 16 16"><path d="M8 3.600C7.200 1.800 5.600 1.300 4.200 1.300C2 1.300 .3 3 .3 5.200C.3 8.800 4.500 11.500 8 15.200C11.500 11.500 15.700 8.800 15.700 5.200C15.700 3 14 1.300 11.800 1.300C10.400 1.300 8.800 1.800 8 3.600Z" fill="url(#hgs)"/><path d="M1.500 4.500C2 2.800 3.500 2 5 2.200C6 2.400 6.800 3 7.200 3.800C6 3.200 3.500 3.200 1.500 4.500Z" fill="#fff" opacity=".3"/><path d="M14.500 4.500C14 2.800 12.500 2 11 2.200C10 2.400 9.200 3 8.800 3.800C10 3.200 12.500 3.200 14.500 4.500Z" fill="#fff" opacity=".3"/></svg>
<div class="t " style="left:1268px;top:522px;">heart.gd</div>
<svg style="left:1346px;top:522px;" width="16" height="16" viewBox="0 0 16 16"><path d="M5 7L8 10L11 7" fill="none" stroke="#e0e0e0" stroke-width="2" stroke-linecap="round" stroke-linejoin="round"/></svg>
</body></html>
